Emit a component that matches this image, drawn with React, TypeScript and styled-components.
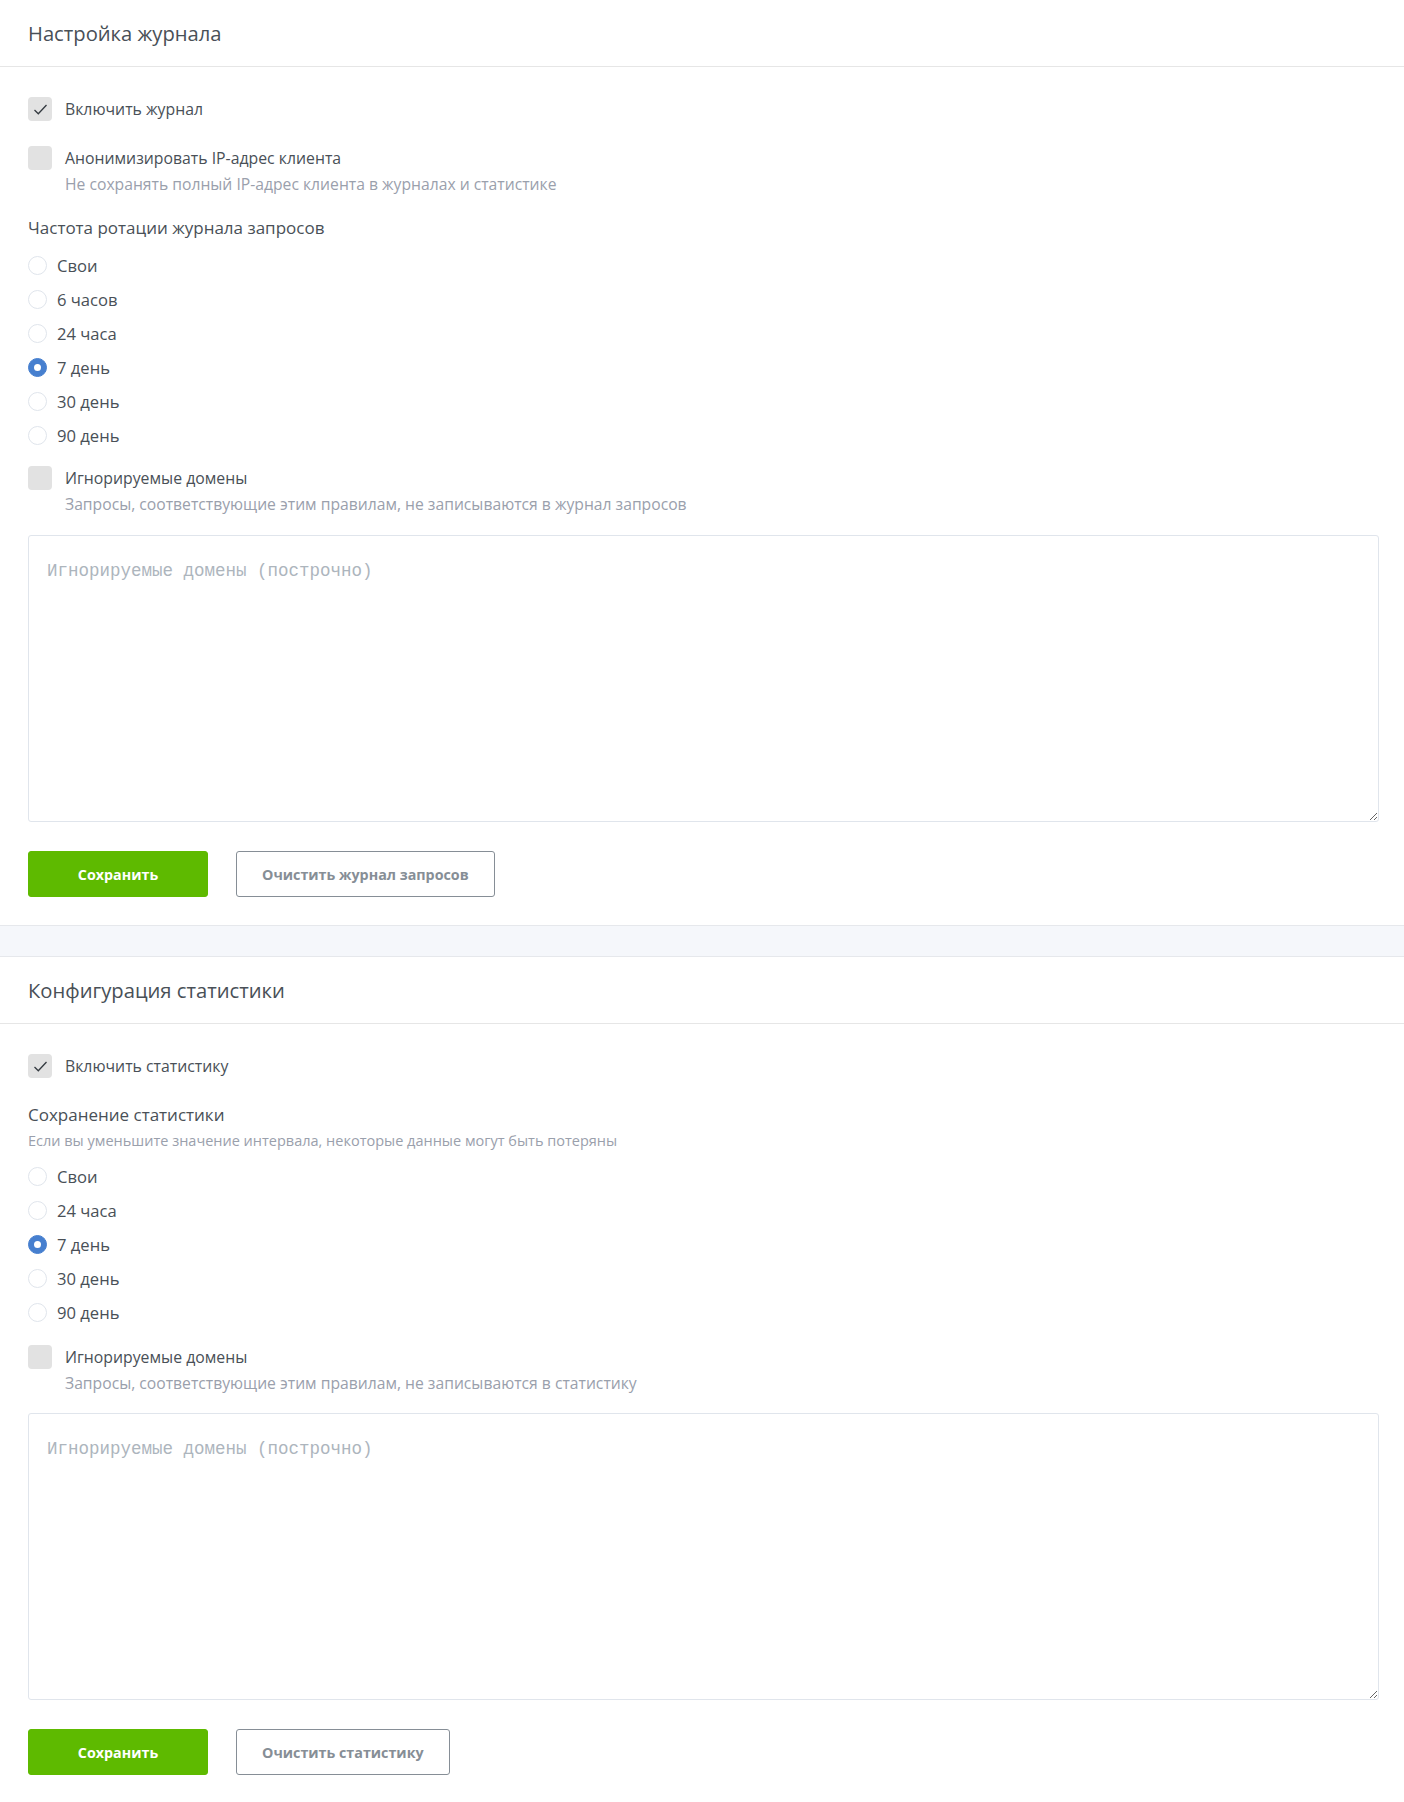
import React, { useState } from "react";
import styled, { createGlobalStyle } from "styled-components";

const GlobalStyle = createGlobalStyle`
  * { box-sizing: border-box; }
  body {
    margin: 0;
    background: #fff;
    font-family: "Open Sans", "Noto Sans", sans-serif;
    color: #495057;
  }
`;

const Page = styled.div`
  display: flex;
  flex-direction: column;
  background: #f5f7fb;
  gap: 30px;
`;

const Card = styled.section`
  background: #fff;
  border-top: 1px solid #e6e8ec;
  border-bottom: 1px solid #e6e8ec;

  &:first-child { border-top: 0; }
  &:last-child { border-bottom: 0; }
`;

const CardHeader = styled.header`
  height: 67px;
  display: flex;
  align-items: center;
  padding: 0 28px;
  border-bottom: 1px solid #e6e6e6;
`;

const CardTitle = styled.h3`
  margin: 0;
  font-size: 20.2px;
  font-weight: 400;
  color: #495057;
`;

const CardBody = styled.div`
  padding: 30px 25px 28px 28px;
  display: flex;
  flex-direction: column;
`;

const Group = styled.div<{ $mb?: number }>`
  margin-bottom: ${(p) => p.$mb ?? 24}px;
`;

const CheckRow = styled.label`
  display: flex;
  align-items: flex-start;
  gap: 13px;
  cursor: pointer;
`;

const CheckBox = styled.span`
  flex: none;
  width: 24px;
  height: 24px;
  border-radius: 4px;
  background: #e2e2e2;
  display: flex;
  align-items: center;
  justify-content: center;
`;

const CheckText = styled.div`
  display: flex;
  flex-direction: column;
`;

const Label = styled.span`
  font-size: 15.8px;
  line-height: 24px;
  color: #495057;
`;

const Hint = styled.span`
  font-size: 15.7px;
  line-height: 20px;
  margin-top: 4px;
  color: #9aa0ac;
`;

const GroupTitle = styled.div`
  font-size: 17px;
  line-height: 24px;
  color: #495057;
`;

const GroupHint = styled.div`
  font-size: 14.5px;
  line-height: 20px;
  margin-top: 4px;
  color: #9aa0ac;
`;

const RadioList = styled.div`
  display: flex;
  flex-direction: column;
  gap: 10px;
  margin-top: 13px;
`;

const RadioRow = styled.label`
  display: flex;
  align-items: center;
  gap: 10px;
  height: 24px;
  cursor: pointer;
`;

const RadioDot = styled.span<{ $on: boolean }>`
  flex: none;
  width: 19px;
  height: 19px;
  border-radius: 50%;
  border: 1px solid ${(p) => (p.$on ? "#467fcf" : "#e0e5ec")};
  background: ${(p) => (p.$on ? "#467fcf" : "#fff")};
  display: flex;
  align-items: center;
  justify-content: center;

  &::after {
    content: "";
    width: 7px;
    height: 7px;
    border-radius: 50%;
    background: #fff;
    display: ${(p) => (p.$on ? "block" : "none")};
  }
`;

const RadioText = styled.span`
  font-size: 16.6px;
  color: #495057;
`;

const DomainsInput = styled.textarea`
  display: block;
  width: 100%;
  height: 287px;
  margin: 0;
  padding: 23px 18px 20px;
  border: 1px solid #e0e5ec;
  border-radius: 3px;
  font-family: "Liberation Mono", "DejaVu Sans Mono", monospace;
  font-size: 17.5px;
  line-height: 24px;
  color: #495057;
  outline: none;

  &::placeholder { color: #adb5bd; }
`;

const Actions = styled.div`
  display: flex;
  gap: 28px;
  margin-top: 29px;
`;

const Button = styled.button<{ $primary?: boolean }>`
  min-width: 180px;
  height: 46px;
  padding: 0 25px;
  border-radius: 3px;
  font-family: inherit;
  font-size: 14.3px;
  font-weight: 700;
  cursor: pointer;
  border: 1px solid ${(p) => (p.$primary ? "#5eba00" : "#868e96")};
  background: ${(p) => (p.$primary ? "#5eba00" : "#fff")};
  color: ${(p) => (p.$primary ? "#fff" : "#868e96")};
`;

const Tick = () => (
  <svg width="15" height="13" viewBox="0 0 15 13">
    <polyline points="1.5,7 5.3,10.8 13.5,2" fill="none" stroke="#343a40" strokeWidth="1.3" />
  </svg>
);

type CheckProps = { label: string; hint?: string; initial?: boolean };

const Check: React.FC<CheckProps> = ({ label, hint, initial = false }) => {
  const [on, setOn] = useState(initial);
  return (
    <CheckRow onClick={() => setOn(!on)}>
      <CheckBox>{on && <Tick />}</CheckBox>
      <CheckText>
        <Label>{label}</Label>
        {hint && <Hint>{hint}</Hint>}
      </CheckText>
    </CheckRow>
  );
};

type RadioProps = { options: string[]; initial: string };

const Radios: React.FC<RadioProps> = ({ options, initial }) => {
  const [value, setValue] = useState(initial);
  return (
    <RadioList>
      {options.map((o) => (
        <RadioRow key={o} onClick={() => setValue(o)}>
          <RadioDot $on={value === o} />
          <RadioText>{o}</RadioText>
        </RadioRow>
      ))}
    </RadioList>
  );
};

const App: React.FC = () => {
  return (
    <>
      <GlobalStyle />
      <Page>
        <Card>
          <CardHeader>
            <CardTitle>Настройка журнала</CardTitle>
          </CardHeader>
          <CardBody>
            <Group $mb={25}>
              <Check label="Включить журнал" initial />
            </Group>
            <Group $mb={22}>
              <Check
                label="Анонимизировать IP-адрес клиента"
                hint="Не сохранять полный IP-адрес клиента в журналах и статистике"
              />
            </Group>
            <Group $mb={19}>
              <GroupTitle>Частота ротации журнала запросов</GroupTitle>
              <Radios
                options={["Свои", "6 часов", "24 часа", "7 день", "30 день", "90 день"]}
                initial="7 день"
              />
            </Group>
            <Group $mb={21}>
              <Check
                label="Игнорируемые домены"
                hint="Запросы, соответствующие этим правилам, не записываются в журнал запросов"
              />
            </Group>
            <DomainsInput placeholder="Игнорируемые домены (построчно)" />
            <Actions>
              <Button $primary>Сохранить</Button>
              <Button>Очистить журнал запросов</Button>
            </Actions>
          </CardBody>
        </Card>

        <Card>
          <CardHeader>
            <CardTitle>Конфигурация статистики</CardTitle>
          </CardHeader>
          <CardBody>
            <Group $mb={25}>
              <Check label="Включить статистику" initial />
            </Group>
            <Group $mb={21}>
              <GroupTitle>Сохранение статистики</GroupTitle>
              <GroupHint>
                Если вы уменьшите значение интервала, некоторые данные могут быть потеряны
              </GroupHint>
              <Radios
                options={["Свои", "24 часа", "7 день", "30 день", "90 день"]}
                initial="7 день"
              />
            </Group>
            <Group $mb={20}>
              <Check
                label="Игнорируемые домены"
                hint="Запросы, соответствующие этим правилам, не записываются в статистику"
              />
            </Group>
            <DomainsInput placeholder="Игнорируемые домены (построчно)" />
            <Actions>
              <Button $primary>Сохранить</Button>
              <Button>Очистить статистику</Button>
            </Actions>
          </CardBody>
        </Card>
      </Page>
    </>
  );
};

export default App;
